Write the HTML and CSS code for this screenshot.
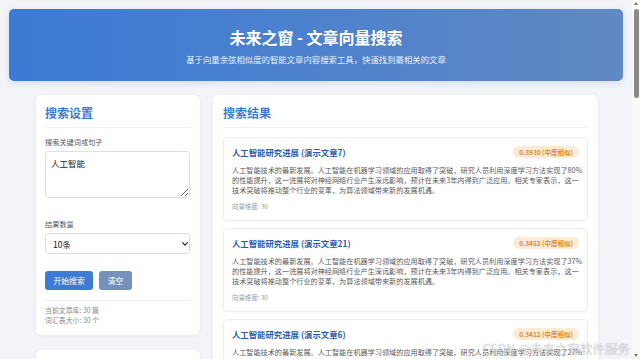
FILE: index.html
```html
<!DOCTYPE html>
<html lang="zh-CN">
<head>
<meta charset="utf-8">
<title>未来之窗 - 文章向量搜索</title>
<link rel="stylesheet" href="styles.css">
</head>
<body>
<div class="page">
  <header class="hero">
    <h1>未来之窗 - 文章向量搜索</h1>
    <p>基于向量余弦相似度的智能文章内容搜索工具，快速找到最相关的文章</p>
  </header>
  <main class="layout">
    <aside class="side">
      <section class="panel settings">
        <h2 class="panel-title">搜索设置</h2>
        <div class="field">
          <label for="q">搜索关键词或句子</label>
          <textarea id="q">人工智能</textarea>
        </div>
        <div class="field">
          <label for="n">结果数量</label>
          <div class="select-wrap">
            <select id="n"><option>10条</option><option>5条</option><option>20条</option></select>
            <svg class="chev" width="6" height="4" viewBox="0 0 6 4"><path d="M0.6 0.6 L3 3.2 L5.4 0.6" fill="none" stroke="#222" stroke-width="1.1" stroke-linecap="round" stroke-linejoin="round"/></svg>
          </div>
        </div>
        <div class="actions">
          <button class="btn primary">开始搜索</button>
          <button class="btn muted">清空</button>
        </div>
        <div class="stats">
          <div>当前文章库: 30 篇</div>
          <div>词汇表大小: 30 个</div>
        </div>
      </section>
      <section class="panel extra"></section>
    </aside>

    <section class="panel results">
      <h2 class="panel-title">搜索结果</h2>

      <article class="card">
        <div class="card-head">
          <h3 class="card-title">人工智能研究进展 (演示文章7)</h3>
          <span class="score">0.3930 (中度相似)</span>
        </div>
        <p class="card-text">人工智能技术的最新发展。人工智能在机器学习领域的应用取得了突破，研究人员利用深度学习方法实现了80%<br>的性能提升，这一进展将对神经网络行业产生深远影响，预计在未来3年内得到广泛应用。相关专家表示，这一<br>技术突破将推动整个行业的变革，为算法领域带来新的发展机遇。</p>
        <div class="card-meta">向量维度: 30</div>
      </article>

      <article class="card">
        <div class="card-head">
          <h3 class="card-title">人工智能研究进展 (演示文章21)</h3>
          <span class="score">0.3452 (中度相似)</span>
        </div>
        <p class="card-text">人工智能技术的最新发展。人工智能在机器学习领域的应用取得了突破，研究人员利用深度学习方法实现了37%<br>的性能提升，这一进展将对神经网络行业产生深远影响，预计在未来3年内得到广泛应用。相关专家表示，这一<br>技术突破将推动整个行业的变革，为算法领域带来新的发展机遇。</p>
        <div class="card-meta">向量维度: 30</div>
      </article>

      <article class="card">
        <div class="card-head">
          <h3 class="card-title">人工智能研究进展 (演示文章6)</h3>
          <span class="score">0.3412 (中度相似)</span>
        </div>
        <p class="card-text">人工智能技术的最新发展。人工智能在机器学习领域的应用取得了突破，研究人员利用深度学习方法实现了27%<br>的性能提升，这一进展将对神经网络行业产生深远影响，预计在未来3年内得到广泛应用。相关专家表示，这一<br>技术突破将推动整个行业的变革，为算法领域带来新的发展机遇。</p>
        <div class="card-meta">向量维度: 30</div>
      </article>
    </section>
  </main>
</div>

<div class="scrollbar" aria-hidden="true">
  <span class="sb-up"></span>
  <span class="sb-thumb"></span>
  <span class="sb-down"></span>
</div>
<div class="watermark">CSDN @未来之窗软件服务</div>
</body>
</html>
```
FILE: styles.css
```css
html, body {
  margin: 0;
  height: 100%;
  overflow: hidden;
}
body {
  background: #f2f4f8;
  font-family: "Noto Sans CJK SC", "Noto Sans", sans-serif;
  color: #333;
}
.page {
  width: 632px;
  padding-top: 9px;
}
.hero {
  margin: 0 9px;
  height: 72px;
  box-sizing: border-box;
  padding-top: 18px;
  border-radius: 5px;
  background: linear-gradient(90deg, #3a7bd5 0%, #4f82cc 55%, #6189c2 100%);
  color: #fff;
  text-align: center;
  box-shadow: 0 2px 6px rgba(58, 123, 213, 0.18);
}
.hero h1 {
  margin: 0;
  font-size: 16px;
  line-height: 20px;
  font-weight: 700;
}
.hero p {
  margin: 6px 0 0;
  font-size: 8.4px;
  line-height: 12px;
  color: rgba(255, 255, 255, 0.92);
}
.layout {
  display: grid;
  grid-template-columns: 164px 385px;
  gap: 13px;
  margin: 14px 0 0 36px;
  align-items: start;
}
.side {
  display: flex;
  flex-direction: column;
  gap: 15px;
}
.panel {
  background: #fff;
  border-radius: 6px;
  box-shadow: 0 1px 4px rgba(30, 50, 90, 0.06);
  box-sizing: border-box;
  padding: 10px 9px;
}
.extra {
  height: 120px;
}
.results {
  padding: 10px 10px;
  min-height: 300px;
}
.panel-title {
  margin: 0 0 9px;
  font-size: 12px;
  line-height: 16px;
  font-weight: 700;
  color: #3a7bd5;
  padding-bottom: 6px;
  border-bottom: 1px solid #eef0f4;
}
.field label {
  display: block;
  font-size: 7.2px;
  line-height: 10px;
  color: #555;
  margin: 0 0 4px;
}
.field + .field {
  margin-top: 21px;
}
.field textarea {
  display: block;
  width: 145px;
  height: 47px;
  box-sizing: border-box;
  border: 1px solid #dcdfe6;
  border-radius: 3px;
  padding: 5px 5px;
  font-family: inherit;
  font-size: 8.5px;
  line-height: 12px;
  color: #222;
  resize: vertical;
}
.select-wrap {
  position: relative;
  width: 145px;
}
.select-wrap select {
  display: block;
  width: 100%;
  height: 21px;
  box-sizing: border-box;
  border: 1px solid #dcdfe6;
  border-radius: 3px;
  padding: 0 7px;
  background: #fff;
  font-family: inherit;
  font-size: 8.5px;
  color: #222;
  appearance: none;
  -webkit-appearance: none;
}
.chev {
  position: absolute;
  right: 2px;
  top: 9px;
}
.actions {
  display: flex;
  gap: 6px;
  margin-top: 17px;
}
.btn {
  height: 19px;
  padding: 0 8.5px;
  border: 0;
  border-radius: 3px;
  color: #fff;
  font-family: inherit;
  font-size: 7.8px;
  line-height: 19px;
}
.btn.primary {
  background: #3b7bd4;
}
.btn.muted {
  background: #7590ba;
}
.stats {
  margin-top: 10px;
  border-top: 1px solid #eef0f4;
  padding-top: 4px;
  font-size: 6.9px;
  line-height: 10px;
  color: #888;
}
.card {
  border: 1px solid #eceef3;
  border-radius: 4px;
  padding: 8px 8px;
  margin-bottom: 7px;
  box-shadow: 0 1px 2px rgba(30, 50, 90, 0.03);
}
.card-head {
  display: flex;
  justify-content: space-between;
  align-items: center;
  height: 12px;
}
.card-title {
  margin: 0;
  font-size: 8.4px;
  line-height: 12px;
  font-weight: 700;
  color: #2b5cae;
}
.score {
  height: 12px;
  padding: 0 6px;
  border-radius: 6px;
  background: #fdebd4;
  color: #e0892c;
  font-size: 6.5px;
  line-height: 12px;
  font-weight: 600;
}
.card-text {
  margin: 7px 0 0;
  font-size: 7.15px;
  line-height: 10px;
  color: #5a5a5a;
  white-space: nowrap;
}
.card-meta {
  margin-top: 7px;
  font-size: 6.4px;
  line-height: 10px;
  color: #9a9a9a;
}
.scrollbar {
  position: fixed;
  top: 0;
  right: 0;
  width: 8px;
  height: 100%;
  background: #fafafa;
}
.sb-thumb {
  position: absolute;
  left: 2px;
  top: 9px;
  width: 5px;
  height: 89px;
  border-radius: 3px;
  background: #8a8a8a;
}
.sb-up, .sb-down {
  position: absolute;
  left: 2px;
  width: 0;
  height: 0;
  border-left: 2px solid transparent;
  border-right: 2px solid transparent;
}
.sb-up {
  top: 2px;
  border-bottom: 3px solid #777;
}
.sb-down {
  bottom: 2px;
  border-top: 3px solid #777;
}
.watermark {
  position: fixed;
  right: 10px;
  bottom: 1px;
  font-family: "Noto Sans CJK SC", "Noto Sans", sans-serif;
  font-size: 12.5px;
  line-height: 18px;
  color: rgba(255, 255, 255, 0.55);
  text-shadow: 0 0 1px rgba(90, 90, 90, 0.55);
}
```
